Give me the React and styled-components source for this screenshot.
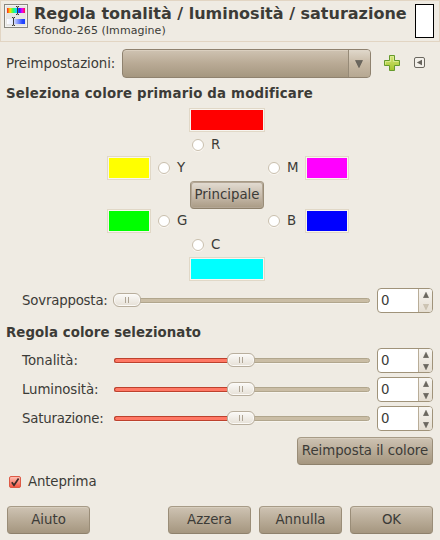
import React from "react";
import styled, { createGlobalStyle } from "styled-components";

const GlobalStyle = createGlobalStyle`
  * { box-sizing: border-box; }
  body { margin: 0; background: #efebe3; }
`;

const Dialog = styled.div`
  width: 440px;
  height: 540px;
  background: #efebe3;
  color: #3c3b37;
  font: 13.33px/16px "DejaVu Sans", sans-serif;
  white-space: nowrap;
  overflow: hidden;
`;

const Header = styled.header`
  display: flex;
  height: 42px;
  padding: 3px 5px 0 3px;
  border: 1px solid #e2d5c3;
`;

const IconFrame = styled.svg`
  display: block;
  width: 24px;
  height: 24px;
  flex: none;
`;

const Titles = styled.div`
  flex: 1;
  margin-left: 6px;
`;

const Title = styled.h1`
  margin: 0;
  font-size: 16px;
  line-height: 19px;
  font-weight: bold;
`;

const Subtitle = styled.div`
  margin-top: 1px;
  font-size: 11px;
  line-height: 14px;
  letter-spacing: 0.05px;
`;

const Preview = styled.div`
  width: 19px;
  height: 34px;
  border: 1px solid #000;
  background: #fff;
`;

const PresetRow = styled.div`
  display: flex;
  align-items: center;
  height: 29px;
  margin-top: 7px;
  padding-left: 6px;
`;

const Label = styled.label`
  width: ${(p) => p.$width}px;
  letter-spacing: ${(p) => p.$spacing || 0}px;
  flex: none;
`;

const Combo = styled.div`
  display: flex;
  justify-content: flex-end;
  width: 249px;
  height: 29px;
  border: 1px solid #8f826f;
  border-radius: 4px;
  background: linear-gradient(#cfc3b2, #b9aa95 50%, #a59780);
  box-shadow: inset 0 1px #dacfbf;
  overflow: hidden;
`;

const ComboArrow = styled.div`
  display: flex;
  align-items: center;
  justify-content: center;
  width: 22px;
  padding-right: 1px;
  border-left: 1px solid #968a77;
  background: linear-gradient(#e0d8cb, #c7b9a5 50%, #b6a892);
`;

const AddIcon = styled.svg`
  width: 16px;
  height: 16px;
  margin: 0 0 2px 13px;
`;

const MenuIcon = styled.svg`
  width: 11px;
  height: 11px;
  margin: 0 0 3px 14px;
`;

const Heading = styled.h2`
  margin: ${(p) => p.$margin};
  padding-left: 6px;
  font-size: 13.33px;
  line-height: 16px;
  letter-spacing: ${(p) => p.$spacing}px;
`;

const ColorGrid = styled.div`
  display: grid;
  grid-template-columns: 44px 38px 76px 40px 44px;
  grid-template-rows: 24px 24px 24px 29px 24px 24px 24px;
  margin: 6px 0 0 107px;
`;

const Swatch = styled.div`
  grid-area: ${(p) => p.$row} / ${(p) => p.$col};
  height: 24px;
  border: 1px solid #e1d8c7;
  padding: 1px;
  background: linear-gradient(${(p) => p.$color}, ${(p) => p.$color}) content-box, #f8f5ef;
`;

const Choice = styled.label`
  grid-area: ${(p) => p.$row} / ${(p) => p.$col};
  display: flex;
  align-items: center;
  gap: 7px;
  height: 24px;
  padding-top: ${(p) => p.$drop || 0}px;
  margin-left: ${(p) => p.$indent}px;
`;

const Radio = styled.span`
  width: 12px;
  height: 12px;
  border: 1px solid #c9bfad;
  border-radius: 50%;
  background: #fff;
  box-shadow: 0 1px #faf7f2;
`;

const Button = styled.button`
  width: ${(p) => p.$width}px;
  height: 28px;
  padding: 0 0 1px;
  border: 1px solid #94876f;
  border-color: #a79b87 #9a8d78 #8e816c;
  border-radius: 4px;
  background: linear-gradient(#cec3b3, #b9ac98 50%, #a5967f);
  box-shadow: inset 0 1px #d7cdbd;
  color: #3c3b37;
  font: inherit;
  letter-spacing: ${(p) => p.$spacing || 0}px;
  white-space: nowrap;
`;

const MainButton = styled(Button)`
  grid-area: 4 / 3;
  justify-self: center;
  align-self: center;
  padding: 1px 0 0;
  background: linear-gradient(#e3ddd3, #c9bdae 50%, #a99a84);
  box-shadow: inset 0 0 0 1px #b3a695;
`;

const ScaleRow = styled.div`
  display: flex;
  align-items: center;
  height: 25px;
  margin-top: ${(p) => p.$top}px;
  padding-left: 22px;
`;

const Track = styled.div`
  display: flex;
  align-items: center;
  width: 256px;
  height: 5px;
  margin: 0 7px 0 1px;
  border: 1px solid #b1a68d;
  border-radius: 3px;
  background: #cabda5;
  box-shadow: 0 1px #f7f4ee;
`;

const Fill = styled.div`
  width: ${(p) => p.$width}px;
  height: 5px;
  flex: none;
  margin-left: -1px;
  border: 1px solid #bd412d;
  border-right: 0;
  border-radius: 3px 0 0 3px;
  background: #ff7865;
`;

const Thumb = styled.div`
  display: flex;
  align-items: center;
  justify-content: center;
  gap: 2px;
  width: 28px;
  height: 14px;
  flex: none;
  margin-top: -1px;
  margin-left: ${(p) => (p.$atStart ? -2 : 0)}px;
  border: 1px solid #b8ae9d;
  border-radius: 6px;
  background: linear-gradient(#fbfaf8, #e6e0d6);
  box-shadow: inset 0 0 0 1px #fcfaf7;
`;

const Grip = styled.i`
  width: 1px;
  height: 6px;
  background: #aea494;
`;

const Spin = styled.div`
  display: flex;
  width: 56px;
  height: 25px;
  border: 1px solid #a0937a;
  border-radius: 4px;
  background: #fff;
  overflow: hidden;
`;

const SpinValue = styled.div`
  width: 40px;
  padding: 4px 0 0 3px;
`;

const SpinArrows = styled.div`
  display: flex;
  flex-direction: column;
  align-items: center;
  justify-content: space-between;
  width: 14px;
  padding: 3px 0 2px;
  border-left: 1px solid #b9ad98;
  background: linear-gradient(#f7f5f1, #e5ded2);
`;

const ResetLine = styled.div`
  display: flex;
  justify-content: flex-end;
  margin-top: 6px;
  padding-right: 7px;
`;

const CheckLine = styled.label`
  display: flex;
  align-items: center;
  gap: 7px;
  height: 16px;
  margin: 9px 0 0 9px;
  letter-spacing: -0.15px;
`;

const CheckIcon = styled.svg`
  width: 12px;
  height: 12px;
`;

const Actions = styled.footer`
  display: flex;
  gap: 8px;
  margin: 16px 7px 0;
  & > :first-child { margin-right: auto; }
`;

const Arrow = ({ up, big, faded }) => (
  <svg width={big ? 8 : 6} height={big ? 8 : 6} viewBox="0 0 6 6">
    <path d={up ? "M3 .3L5.6 5.7H.4Z" : "M.4.3h5.2L3 5.7Z"} fill={faded ? "#cec5b4" : "#6b675f"} stroke={faded ? "#beb4a2" : "#5b5850"} strokeWidth=".5" />
  </svg>
);

const Slider = ({ label, spacing, top = 0, filled = 0, faded }) => (
  <ScaleRow $top={top}>
    <Label $width={91} $spacing={spacing}>{label}</Label>
    <Track>
      {filled > 0 && <Fill $width={filled} />}
      <Thumb $atStart={!filled}><Grip /><Grip /></Thumb>
    </Track>
    <Spin>
      <SpinValue>0</SpinValue>
      <SpinArrows><Arrow up /><Arrow faded={faded} /></SpinArrows>
    </Spin>
  </ScaleRow>
);

const Option = ({ row, col, indent, drop, children }) => (
  <Choice $row={row} $col={col} $indent={indent} $drop={drop}><Radio />{children}</Choice>
);

const HueIcon = () => (
  <IconFrame viewBox="0 0 24 24">
    <defs>
      <linearGradient id="hue">
        <stop offset="0" stopColor="#f22" /><stop offset=".17" stopColor="#fd0" />
        <stop offset=".34" stopColor="#3f5" /><stop offset=".52" stopColor="#0df" />
        <stop offset=".68" stopColor="#22f" /><stop offset=".84" stopColor="#e0f" />
        <stop offset="1" stopColor="#f13" />
      </linearGradient>
      <linearGradient id="sat"><stop offset="0" stopColor="#fff" /><stop offset=".35" stopColor="#dfe5ff" /><stop offset=".85" stopColor="#2948ff" /><stop offset="1" stopColor="#1740ff" /></linearGradient>
    </defs>
    <rect x=".5" y=".5" width="23" height="23" fill="#e7e6e4" stroke="#88867f" />
    <rect x="1.5" y="1.5" width="21" height="21" fill="none" stroke="#f4f3f1" />
    <rect x="3" y="4" width="18" height="5" fill="url(#hue)" />
    <rect x="3" y="15" width="18" height="5" fill="url(#sat)" />
    <path d="M12 2.5h1l.5.6.5-.6h1M13.5 3v7M12 10.5h1l.5-.6.5.6h1M8 13.5h1l.5.6.5-.6h1M9.5 14v7M8 21.5h1l.5-.6.5.6h1" fill="none" stroke="#3a3a3a" strokeWidth="1" />
  </IconFrame>
);

export default function App() {
  return (
    <Dialog>
      <GlobalStyle />
      <Header>
        <HueIcon />
        <Titles>
          <Title>Regola tonalità / luminosità / saturazione</Title>
          <Subtitle>Sfondo-265 (Immagine)</Subtitle>
        </Titles>
        <Preview />
      </Header>

      <PresetRow>
        <Label $width={116} $spacing={-0.07}>Preimpostazioni:</Label>
        <Combo><ComboArrow><Arrow big /></ComboArrow></Combo>
        <AddIcon viewBox="0 0 16 16">
          <defs><linearGradient id="plus" x2="0" y2="1"><stop stopColor="#d5e67a" /><stop offset="1" stopColor="#a3c42b" /></linearGradient></defs>
          <path d="M5.5.5h5v5h5v5h-5v5h-5v-5h-5v-5h5Z" fill="url(#plus)" stroke="#659a2c" />
          <path d="M6.5 6.5v-5h3v5h5M1.5 9.5v-3h5" fill="none" stroke="#e3efa0" strokeWidth=".7" />
        </AddIcon>
        <MenuIcon viewBox="0 0 11 11">
          <rect x=".5" y=".5" width="10" height="10" rx="1.5" fill="#f3f0ea" stroke="#6b6860" />
          <path d="M8 2.7v5.6L2.8 5.5Z" fill="#66635c" />
        </MenuIcon>
      </PresetRow>

      <Heading $margin="8px 0 0" $spacing={0.19}>Seleziona colore primario da modificare</Heading>

      <ColorGrid>
        <Swatch $row={1} $col={3} $color="#f00" />
        <Option row={2} col={3} indent={3} drop={1}>R</Option>
        <Swatch $row={3} $col={1} $color="#ff0" />
        <Option row={3} col={2} indent={7}>Y</Option>
        <Option row={3} col={4} indent={3}>M</Option>
        <Swatch $row={3} $col={5} $color="#f0f" />
        <MainButton $width={74}>Principale</MainButton>
        <Swatch $row={5} $col={1} $color="#0f0" />
        <Option row={5} col={2} indent={7}>G</Option>
        <Option row={5} col={4} indent={3}>B</Option>
        <Swatch $row={5} $col={5} $color="#00f" />
        <Option row={6} col={3} indent={3}>C</Option>
        <Swatch $row={7} $col={3} $color="#0ff" />
      </ColorGrid>

      <Slider label="Sovrapposta:" spacing={-0.2} top={7} faded />
      <Heading $margin="12px 0 0" $spacing={0.07}>Regola colore selezionato</Heading>
      <Slider label="Tonalità:" top={7} filled={113} />
      <Slider label="Luminosità:" spacing={-0.1} top={4} filled={113} />
      <Slider label="Saturazione:" spacing={-0.2} top={4} filled={113} />

      <ResetLine><Button $width={136} $spacing={-0.04}>Reimposta il colore</Button></ResetLine>

      <CheckLine>
        <CheckIcon viewBox="0 0 12 12">
          <defs><linearGradient id="check" x2="0" y2="1"><stop stopColor="#ffc4b8" /><stop offset="1" stopColor="#f6523f" /></linearGradient></defs>
          <rect x=".5" y=".5" width="11" height="11" rx="1.5" fill="url(#check)" stroke="#dd5a46" />
          <path d="M2.8 6.2L5 9.2 9.6 2.6" fill="none" stroke="#3c2b28" strokeWidth="1.7" />
        </CheckIcon>
        Anteprima
      </CheckLine>

      <Actions>
        <Button $width={83}>Aiuto</Button>
        <Button $width={83}>Azzera</Button>
        <Button $width={83}>Annulla</Button>
        <Button $width={83}>OK</Button>
      </Actions>
    </Dialog>
  );
}
